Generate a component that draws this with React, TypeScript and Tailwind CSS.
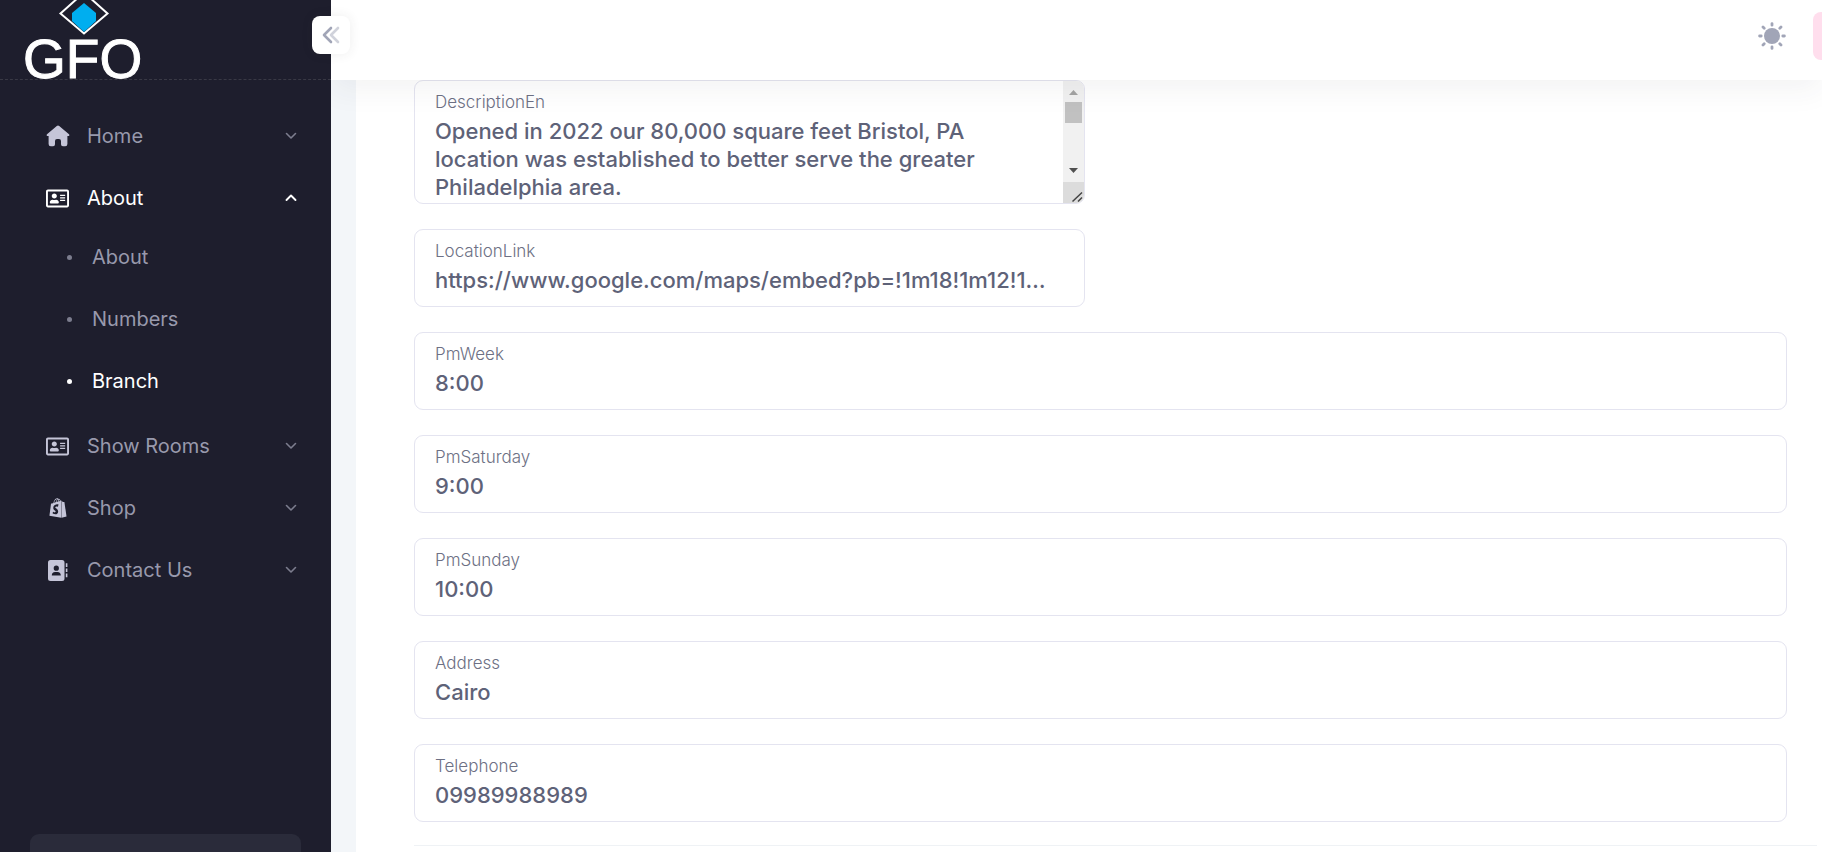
import { useState } from "react";
import type { ReactNode } from "react";
import { FaRegAddressCard, FaShopify } from "react-icons/fa";

function Logo() {
  return (
    <svg width="140" height="80" viewBox="0 0 140 80" className="overflow-visible" role="img" aria-label="GFO">
      <path d="M66 -7.5 L89.5 13.5 L66 33.5 L42.5 13.5 Z" fill="none" stroke="#fff" strokeWidth="2" />
      <path d="M66 3 L78 13 V21 L66 32 L54 21 V13 Z" fill="#00aeef" />
      <text x="5" y="78" fill="#fff" stroke="#fff" strokeWidth="1" fontFamily="Liberation Sans, sans-serif" fontSize="55">GFO</text>
    </svg>
  );
}

function HomeIcon() {
  return (
    <svg width="24" height="24" viewBox="0 0 24 24" fill="currentColor">
      <path d="M10.8 1.9 Q12 1 13.2 1.9 L23 10.2 Q23.7 10.9 23.2 11.7 Q22.9 12.1 22 12.1 H21.4 V20 Q21.4 22.2 19.2 22.2 H16.9 Q15 22.2 15 20.3 V17 Q15 15 13 15 H11 Q9 15 9 17 V20.3 Q9 22.2 7.1 22.2 H4.8 Q2.6 22.2 2.6 20 V12.1 H2 Q1.1 12.1 .8 11.7 Q.3 10.9 1 10.2 Z" />
    </svg>
  );
}

function ContactIcon() {
  return (
    <svg width="23" height="23" viewBox="0 0 23 23" fill="currentColor">
      <path fillRule="evenodd" d="M4.5 1 H16 Q18.5 1 18.5 3.5 V19.5 Q18.5 22 16 22 H4.5 Q2 22 2 19.5 V3.5 Q2 1 4.5 1 Z M10.3 6.6 A2.6 2.6 0 1 0 10.3 11.8 A2.6 2.6 0 1 0 10.3 6.6 Z M5.8 16.4 H14.8 Q14.8 12.9 11.5 12.9 H9.1 Q5.8 12.9 5.8 16.4 Z" />
      <path d="M19.8 4.3 H21.4 V8 H19.8 Z M19.8 9.4 H21.4 V13.1 H19.8 Z M19.8 14.5 H21.4 V18.2 H19.8 Z" />
    </svg>
  );
}

function Chevron({ up = false }: { up?: boolean }) {
  return (
    <svg
      width="12"
      height="8"
      viewBox="0 0 12 8"
      fill="none"
      stroke="currentColor"
      strokeWidth={up ? 1.9 : 1.6}
      strokeLinecap="round"
      strokeLinejoin="round"
      className={up ? "text-white" : "text-[#7c7d8e]"}
    >
      <path d={up ? "M1.5 6 L6 1.5 L10.5 6" : "M1.5 1.5 L6 6 L10.5 1.5"} />
    </svg>
  );
}

function SunIcon() {
  return (
    <svg width="28" height="28" viewBox="0 0 28 28" stroke="#a1a5b7" strokeWidth="2.8" strokeLinecap="round">
      <circle cx="14" cy="14" r="8" fill="#a1a5b7" stroke="none" />
      <path d="M14 1.6V3.2M14 24.8V26.4M1.6 14H3.2M24.8 14H26.4M5 5L6.2 6.2M21.8 21.8L23 23M5 23L6.2 21.8M21.8 6.2L23 5" />
    </svg>
  );
}

function MenuItem({ icon, label, open = false }: { icon: ReactNode; label: string; open?: boolean }) {
  return (
    <button
      type="button"
      aria-expanded={open}
      className={`flex h-[62px] w-full items-center pr-[34px] pl-[45px] text-left text-[20px] ${open ? "text-white" : "text-[#9899ac]"}`}
    >
      <span className={`flex w-[25px] justify-center ${open ? "text-white" : "text-[#c5c5d8]"}`}>{icon}</span>
      <span className="ml-[17px] flex-1">{label}</span>
      <Chevron up={open} />
    </button>
  );
}

function SubItem({ label, active = false }: { label: string; active?: boolean }) {
  return (
    <li>
      <a href="#" className={`flex h-[62px] items-center pb-[6px] pl-[67px] text-[20px] ${active ? "text-white" : "text-[#9899ac]"}`}>
        <span className={`size-[5px] rounded-full ${active ? "bg-white" : "bg-[#7c7d8e]"}`} />
        <span className="ml-[20px]">{label}</span>
      </a>
    </li>
  );
}

function Field({ id, label, value, className = "" }: { id: string; label: string; value: string; className?: string }) {
  const [text, setText] = useState(value);
  return (
    <div className={`flex h-[78px] flex-col rounded-[9px] border border-[#e4e4f0] px-[20px] pt-[10px] ${className}`}>
      <label htmlFor={id} className="text-[17px] leading-[22px] font-light text-[#6d7084]">{label}</label>
      <input
        id={id}
        value={text}
        onChange={(e) => setText(e.target.value)}
        className="h-[36px] w-full overflow-hidden bg-transparent text-[22px] font-medium text-ellipsis text-[#5e6278] outline-none"
      />
    </div>
  );
}

function DescriptionField() {
  const [text, setText] = useState(
    "Opened in 2022 our 80,000 square feet Bristol, PA location was established to better serve the greater Philadelphia area.",
  );
  return (
    <div className="flex h-[124px] w-[671px] overflow-hidden rounded-[9px] border border-[#e4e4f0]">
      <div className="flex flex-1 flex-col pt-[10px] pl-[20px]">
        <label htmlFor="description" className="text-[17px] leading-[22px] font-light text-[#6d7084]">DescriptionEn</label>
        <textarea
          id="description"
          value={text}
          onChange={(e) => setText(e.target.value)}
          className="flex-1 resize-none overflow-hidden bg-transparent pt-[4px] pr-[20px] text-[22px] leading-[28px] font-medium text-[#5e6278] outline-none"
        />
      </div>
      <div className="flex w-[21px] flex-col bg-[#f1f1f1]">
        <svg width="21" height="21" viewBox="0 0 21 21"><path d="M6 14 L10.5 9 L15 14 Z" fill="#a3a3a3" /></svg>
        <div className="mx-[2px] h-[21px] bg-[#c1c1c1]" />
        <div className="flex-1" />
        <svg width="21" height="21" viewBox="0 0 21 21"><path d="M6 7 L10.5 12 L15 7 Z" fill="#505050" /></svg>
        <svg width="21" height="21" viewBox="0 0 21 21">
          <rect width="21" height="21" fill="#dcdcdc" />
          <path d="M9.5 19.5 L19 10.5 M15 19.5 L19 15.5" stroke="#444" strokeWidth="1.5" />
        </svg>
      </div>
    </div>
  );
}

const fields = [
  { id: "pm-week", label: "PmWeek", value: "8:00" },
  { id: "pm-saturday", label: "PmSaturday", value: "9:00" },
  { id: "pm-sunday", label: "PmSunday", value: "10:00" },
  { id: "address", label: "Address", value: "Cairo" },
  { id: "telephone", label: "Telephone", value: "09989988989" },
];

export default function App() {
  return (
    <div className="flex h-screen overflow-hidden bg-[#f3f6f9] font-[Inter,sans-serif]">
      <aside className="relative z-20 flex w-[331px] shrink-0 flex-col bg-[#1e1e2d]">
        <div className="h-[80px] shrink-0 border-b border-dashed border-[#393945] pl-[18px]">
          <Logo />
        </div>
        <button
          type="button"
          aria-label="Collapse sidebar"
          className="absolute top-[16px] -right-[19px] flex size-[38px] items-center justify-center rounded-[8px] bg-white shadow-[0_0_12px_rgba(55,55,55,0.09)]"
        >
          <svg width="18" height="18" viewBox="0 0 18 18" fill="none" stroke="#a1a5b7" strokeWidth="2.6" strokeLinecap="round" strokeLinejoin="round">
            <path d="M9 2 L2 9 L9 16" />
            <path d="M16 2 L9 9 L16 16" opacity="0.5" />
          </svg>
        </button>
        <nav className="flex-1 pt-[25px]">
          <MenuItem icon={<HomeIcon />} label="Home" />
          <MenuItem icon={<FaRegAddressCard size={23} />} label="About" open />
          <ul>
            <SubItem label="About" />
            <SubItem label="Numbers" />
            <SubItem label="Branch" active />
          </ul>
          <MenuItem icon={<FaRegAddressCard size={23} />} label="Show Rooms" />
          <MenuItem icon={<FaShopify size={20} />} label="Shop" />
          <MenuItem icon={<ContactIcon />} label="Contact Us" />
        </nav>
        <div className="mx-[30px] h-[18px] shrink-0 rounded-t-[9px] bg-[#2a2b3a]" />
      </aside>

      <div className="flex min-w-0 flex-1 flex-col">
        <header className="relative z-10 flex h-[80px] shrink-0 items-start justify-end bg-white pt-[12px] shadow-[0_10px_30px_rgba(55,55,70,0.06)]">
          <button type="button" aria-label="Theme" className="mt-[10px] mr-[27px]">
            <SunIcon />
          </button>
          <button type="button" aria-label="Account" className="-mr-[39px] size-[48px] rounded-[8px] bg-[#ffdeed]" />
        </header>
        <main className="ml-[25px] flex-1 bg-white pr-[5px] pl-[58px]">
          <form className="mr-[30px] flex flex-col gap-[25px]">
            <DescriptionField />
            <Field
              id="location"
              label="LocationLink"
              value="https://www.google.com/maps/embed?pb=!1m18!1m12!1m3!1d3052.8!2d-74.88!3d40.11"
              className="w-[671px]"
            />
            {fields.map((f) => (
              <Field key={f.id} {...f} />
            ))}
          </form>
          <hr className="mt-[23px] border-[#eff2f5]" />
        </main>
      </div>
    </div>
  );
}
